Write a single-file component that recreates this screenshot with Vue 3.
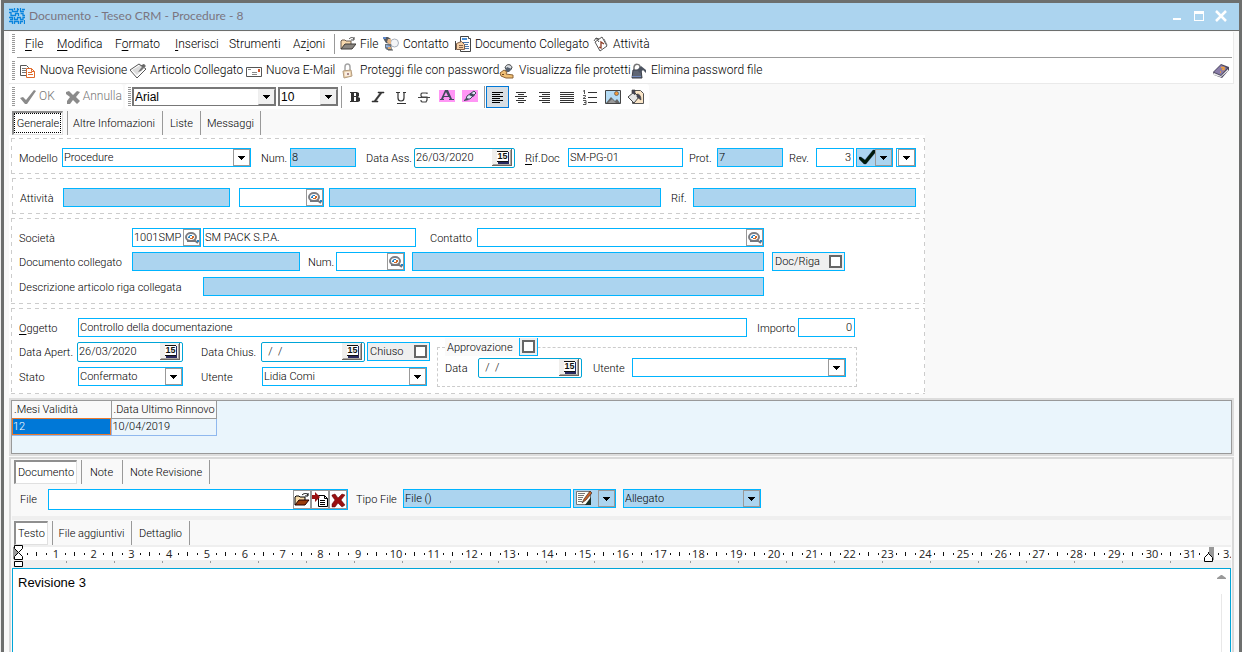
<script setup>
import { ref } from 'vue'

const menus = [
  { pre: '', key: 'F', post: 'ile' },
  { pre: '', key: 'M', post: 'odifica' },
  { pre: 'F', key: 'o', post: 'rmato' },
  { pre: '', key: 'I', post: 'nserisci' },
  { pre: 'Strumenti', key: '', post: '' },
  { pre: 'Az', key: 'i', post: 'oni' },
]
const links = [
  { icon: 'i-folder', text: 'File' },
  { icon: 'i-contact', text: 'Contatto' },
  { icon: 'i-doclink', text: 'Documento Collegato' },
  { icon: 'i-activity', text: 'Attività' },
]
const actions = [
  { icon: 'i-revision', text: 'Nuova Revisione' },
  { icon: 'i-article', text: 'Articolo Collegato' },
  { icon: 'i-mail', text: 'Nuova E-Mail' },
  { icon: 'i-lock', text: 'Proteggi file con password' },
  { icon: 'i-viewlock', text: 'Visualizza file protetti' },
  { icon: 'i-unlock', text: 'Elimina password file' },
]
const styleTools = [
  { icon: 'i-bold', text: 'Grassetto' },
  { icon: 'i-italic', text: 'Corsivo' },
  { icon: 'i-under', text: 'Sottolineato' },
  { icon: 'i-strike', text: 'Barrato' },
  { icon: 'i-color', text: 'Colore testo' },
  { icon: 'i-marker', text: 'Evidenziatore' },
]
const paraTools = [
  { icon: 'i-left', text: 'Sinistra', on: true },
  { icon: 'i-center', text: 'Centro' },
  { icon: 'i-right', text: 'Destra' },
  { icon: 'i-justify', text: 'Giustifica' },
  { icon: 'i-list', text: 'Elenco' },
  { icon: 'i-image', text: 'Immagine' },
  { icon: 'i-fill', text: 'Sfondo' },
]
const mainTabs = ['Generale', 'Altre Infomazioni', 'Liste', 'Messaggi']
const docTabs = ['Documento', 'Note', 'Note Revisione']
const textTabs = ['Testo', 'File aggiuntivi', 'Dettaglio']

const cm = 37.8
const rulerNumbers = Array.from({ length: 32 }, (_, i) => ({ n: i < 31 ? i + 1 : '3.', x: 5 + (i + 1) * cm }))
const rulerMarks = Array.from({ length: 32 }, (_, i) => Math.round(5 + i * cm))
const rulerStops = Array.from({ length: 24 }, (_, i) => 53 + i * 48)

const body = ref('Revisione 3')
</script>

<template>
  <div class="desk">
    <svg class="defs" width="0" height="0" aria-hidden="true">
      <symbol id="arrow" viewBox="0 0 7 4"><path d="M0 0h7v1h-1v1h-1v1h-1v1h-1v-1h-1v-1h-1v-1h-1z" fill="#000" /></symbol>
      <symbol id="lens" viewBox="0 0 14 12">
        <ellipse cx="6" cy="5" rx="5" ry="4" fill="#fff" stroke="#7d7d82" stroke-width="2" />
        <path d="M2 9h8M9 8l4 3" stroke="#77777c" stroke-width="2" />
        <path d="M3 5l2-2h2v1H5v2H3z" fill="#1d7fc4" /><path d="M5 6h3v1H5zM7 4h2v2H7z" fill="#d06a26" />
        <path d="M12 8h2v2h-2z" fill="#2a83c2" />
      </symbol>
      <symbol id="cal" viewBox="0 0 20 17">
        <path d="M0 0h20v17H0z" fill="#f0efed" /><path d="M0 16h19V0h1v17H0z" fill="#6b6560" /><path d="M1 15h17V1h1v15H1z" fill="#aaa5a0" />
        <path d="M15 3h2v12H6v-2h9z" fill="#28285e" /><path d="M5 2h11v11H5z" fill="#fff" /><path d="M5 2h11v1H5zM5 12h11v1H5z" fill="#111" />
      </symbol>
      <symbol id="i-folder" viewBox="0 0 16 16">
        <path d="M1 13V5l1-1h3l1 1h5v3" fill="#f7d9ae" stroke="#6b5a4c" />
        <path d="M1 13l4-5h11l-4 5z" fill="#8a8681" stroke="#3c3a38" />
        <path d="M9 3c2-2 4-2 5 0M14 1v3h-3" fill="none" stroke="#444" />
      </symbol>
      <symbol id="i-folder2" viewBox="0 0 16 16">
        <path d="M1 13V5l1-1h3l1 1h5v3" fill="#f9dca8" stroke="#000" />
        <path d="M1 13l4-5h10l-4 5z" fill="#9a3d0c" stroke="#200" />
        <path d="M8 3c2-2 5-2 6 0M14 1v3h-3" fill="none" stroke="#000" />
      </symbol>
      <symbol id="i-contact" viewBox="0 0 16 16">
        <circle cx="11.500" cy="7" r="4" fill="#f4f5f7" stroke="#a9b0bb" />
        <path d="M0 1h5l3 2-1 5-4-1-2-3z" fill="#565a60" /><path d="M5 3h3v5H6L4 6z" fill="#e6b889" />
        <path d="M0 1h3v2H0z" fill="#5e87c7" /><path d="M2 8h6l1 6H4l-2-2z" fill="#6c757f" /><path d="M3 9l4 1v2l-4-1z" fill="#8fb2e6" />
        <path d="M5 14h5" stroke="#555" /><path d="M5 11h3v2H5z" fill="#e0a86e" />
      </symbol>
      <symbol id="i-doclink" viewBox="0 0 16 16">
        <path d="M5.500 .5h8v2h2v13h-10z" fill="#fff" stroke="#444" /><path d="M7 2h5v2H7z" fill="#4a90d9" /><path d="M8 6.500h6M9 8.500h4M10 10.500h4M10 12.500h4" stroke="#4a78ad" />
        <path d="M0 5h1v9H0z" fill="#444" /><path d="M1.500 7.500l5-2 3 3v5h-8z" fill="#f5cfa4" stroke="#80604a" /><path d="M4 9.500h4M4 11.500h4" stroke="#80604a" />
      </symbol>
      <symbol id="i-activity" viewBox="0 0 16 16">
        <path d="M2 6l7-5 5 9-7 5z" fill="#fff" stroke="#555" /><path d="M1 5l2-3 3 1M3 2l3 4" fill="none" stroke="#555" />
        <path d="M6 11l2 1V6l3 2" fill="none" stroke="#8c3a22" stroke-width="1.3" /><path d="M11 3l3 6" stroke="#777" />
      </symbol>
      <symbol id="i-revision" viewBox="0 0 16 16">
        <path d="M.5 2.500h6l2 2v8h-8z" fill="#fff" stroke="#555" /><path d="M2 5.500h4M2 7.500h4M2 9.500h4" stroke="#777" />
        <path d="M6.500 5.500h5l3 3v6h-8z" fill="#fff" stroke="#e06a2b" /><path d="M11.500 5.500v3h3M8 9.500h4M8 11.500h5" fill="none" stroke="#e06a2b" />
      </symbol>
      <symbol id="i-article" viewBox="0 0 16 16">
        <path d="M0 7l9-6 7 5-9 9z" fill="#fff" stroke="#555" /><path d="M2 7l7-4 4 3-6 6z" fill="#dcdcdc" /><path d="M8 9l6-8 2 2-5 5z" fill="#777" /><path d="M9 3l5-2 1 3z" fill="#666" />
      </symbol>
      <symbol id="i-mail" viewBox="0 0 16 16">
        <path d="M.5 4.500h15v9H.5z" fill="#fff" stroke="#555" /><path d="M12 6h2v3h-2z" fill="#d4552a" /><path d="M2 6.500h3M6 9.500h5M6 11.500h5" stroke="#888" />
      </symbol>
      <symbol id="i-lock" viewBox="0 0 16 16">
        <path d="M5 8V4c0-4 5-4 5 0v4" fill="none" stroke="#a5a5a5" stroke-width="1.5" /><path d="M3 8l8-1 1 6-8 2z" fill="#efd6b4" stroke="#b39b7d" /><path d="M5 9h5v4H5z" fill="#f8ede0" /><path d="M7 10h2v2H7z" fill="#a88" />
      </symbol>
      <symbol id="i-viewlock" viewBox="0 0 16 16">
        <path d="M6 5c1-5 7-4 7 0l-3 3z" fill="#d8dde2" stroke="#444" /><path d="M8 4l5 2-3 3H5z" fill="#55606e" />
        <path d="M1 10l4-3 3 2-1 2 7 1v3H7l-5-2z" fill="#f0bf73" stroke="#8c6337" /><path d="M3 11h2v1H3z" fill="#6b4423" />
      </symbol>
      <symbol id="i-unlock" viewBox="0 0 16 16">
        <path d="M3 7V4c1-4 6-3 6 0v3" fill="none" stroke="#777" stroke-width="1.5" /><path d="M2 7h8l1 8H1z" fill="#5f6674" stroke="#3a3f4a" /><path d="M6 7l4-4 5 4v3l-3-3-3 3z" fill="#4d5461" /><path d="M1 13.500h9" stroke="#7089bd" />
      </symbol>
      <symbol id="i-book" viewBox="0 0 16 16">
        <path d="M0 9l8-8 8 3v3l-7 8-8-3z" fill="#4d4960" /><path d="M1 9l7-7 6 3-6 7z" fill="#8a7da8" /><path d="M1 10l7 3 7-7v2l-7 6-7-2z" fill="#eee" />
        <path d="M8 4.500h3v2H9M7 9h1" fill="none" stroke="#f2a13a" stroke-width="1.4" />
      </symbol>
      <symbol id="i-ok" viewBox="0 0 16 16"><path d="M0 9l3-1 3 3 8-10 2 1L7 15H5z" fill="#8b8b8b" /></symbol>
      <symbol id="i-no" viewBox="0 0 16 16"><path d="M1 3l3-1 4 4 4-4 3 1-4 5 4 4-3 3-4-4-3 4H2v-3l3-4-4-3z" fill="#8b8b8b" /></symbol>
      <symbol id="i-red" viewBox="0 0 16 16"><path d="M2 3l3-1 3 4 4-4 3 1-4 5 4 5-3 2-4-4-3 4H2v-3l3-4-3-4z" fill="#9a0f10" stroke="#500" stroke-width=".5" /></symbol>
      <symbol id="i-bold" viewBox="0 0 16 16"><path fill-rule="evenodd" d="M3 3h7l2 1v3l-1 1 2 1v3l-2 1H3v-1h1V4H3zM7 4v3h2V4zM7 8v4h2V8z" fill="#333" /></symbol>
      <symbol id="i-italic" viewBox="0 0 16 16"><path d="M8 3h6v1h-2L6 12h2v1H2v-1h2l6-8H8z" fill="#333" stroke="#333" stroke-width=".5" /></symbol>
      <symbol id="i-under" viewBox="0 0 16 16"><path d="M5 3v6q0 3 3 3t3-3V3M3 3.500h4M10 3.500h3M4 14.500h9" fill="none" stroke="#333" stroke-width="1.2" /></symbol>
      <symbol id="i-strike" viewBox="0 0 16 16"><path d="M11 5V4H6L5 5v2l1 1h5v3l-1 2H6l-1-1v-1M2 8.500h12" fill="none" stroke="#444" stroke-width="1.2" /></symbol>
      <symbol id="i-color" viewBox="0 0 16 16"><path d="M0 1h16v12H0z" fill="#ff96f5" /><path fill-rule="evenodd" d="M6 1h3l4 9h2v1h-5v-1h1L10 8H5l-1 2h1v1H1v-1h1zM7 3L5 7h4z" fill="#414a5c" /></symbol>
      <symbol id="i-marker" viewBox="0 0 16 16"><path d="M0 1h16v12H0z" fill="#ff96f5" /><path d="M4 10l1-3 7-5 2 2-6 6z" fill="#dce4f4" stroke="#414a5c" /><path d="M2 11l3-2 2 2-5 1zM9 4l4 2-2 2-4-2z" fill="#414a5c" /></symbol>
      <symbol id="i-left" viewBox="0 0 16 16"><path d="M2 3.500h11M2 5.500h8M2 7.500h11M2 9.500h8M2 11.500h11M2 13.500h8" stroke="#000" /></symbol>
      <symbol id="i-center" viewBox="0 0 16 16"><path d="M3 3.500h10M5 5.500h6M2 7.500h12M5 9.500h6M3 11.500h10M5 13.500h6" stroke="#333" /></symbol>
      <symbol id="i-right" viewBox="0 0 16 16"><path d="M3 3.500h11M6 5.500h8M3 7.500h11M6 9.500h8M3 11.500h11M6 13.500h8" stroke="#333" /></symbol>
      <symbol id="i-justify" viewBox="0 0 16 16"><path d="M1 3.500h14M1 5.500h14M1 7.500h14M1 9.500h14M1 11.500h14M1 13.500h14" stroke="#333" /></symbol>
      <symbol id="i-list" viewBox="0 0 16 16"><path d="M6 3.500h9M6 8.500h9M6 13.500h9" stroke="#333" /><path d="M2.500 1v4M1 2h1M1 6.500h2.500v1L1 9.500h3M1 11.500h3v4H1M2 13.500h2" fill="none" stroke="#444" stroke-width=".9" /></symbol>
      <symbol id="i-image" viewBox="0 0 16 16"><path d="M.5 1.500h15v13H.5z" fill="#b5dcf5" stroke="#444" /><path d="M1 14l5-6 4 4 2-2 3 4z" fill="#666" /><path d="M3 14l4-4 4 4z" fill="#999" /><circle cx="11.500" cy="4.500" r="2" fill="#f29a3a" stroke="#555" stroke-width=".7" /></symbol>
      <symbol id="i-fill" viewBox="0 0 16 16"><path d="M4.500 1.500h8l3 3v10h-11z" fill="#fbe6c8" stroke="#555" /><path d="M0 8l6-5 5 5-5 6z" fill="#e6e6e6" stroke="#444" /><path d="M4 4V1h3v5M9 5q4 0 4 6l-4-3z" fill="#445" stroke="#444" stroke-width=".7" /></symbol>
      <symbol id="i-insert" viewBox="0 0 16 16"><path d="M6.500 3.500h6l3 3v8h-9z" fill="#fff" stroke="#000" /><path d="M12.500 3.500v3h3M8 8.500h5M8 10.500h5M8 12.500h5" fill="none" stroke="#000" /><path d="M0 3h3V0l5 5-5 5V7H0z" fill="#9a0f10" /></symbol>
      <symbol id="i-write" viewBox="0 0 16 16"><path d="M.5 1.500h14v13H.5z" fill="#fffef6" stroke="#777" /><path d="M2 3.500h7M2 5.500h6M2 7.500h5M2 9.500h4M2 11.500h4" stroke="#777" /><path d="M15 7v8H9z" fill="#1c2e25" /><path d="M6 13l2-4 6-8 2 2-6 7z" fill="#c96228" stroke="#222" stroke-width=".6" /></symbol>
      <symbol id="i-check" viewBox="0 0 16 16"><path d="M0 8h2l4 3 8-10h2v3L7 15H5L0 10z" fill="#001a08" stroke="#0a1b55" stroke-width=".3" /></symbol>
      <symbol id="i-logo" viewBox="0 0 16 16">
        <path d="M0 1.500h3.500v2H6M5.500 0v2M8.500 0v3.500H6M8 1.500h2M11.500 0v3.500H15M13 1.500h3M0 4.500h2v3h4.500v-2H9M0 9.500h3.500v2H1M9.500 5v3M11.500 5.500H14v2h2M5.500 9v2.500h3v-2h3v2H14v-2h2M0 13.500h3.500V16M5.500 16v-2.500h4V16M11.500 16v-2.500H14M15.500 12v4" fill="none" stroke="#0a84dd" stroke-width="1.300" />
      </symbol>
    </svg>

    <header class="title">
      <svg class="logo"><use href="#i-logo" /></svg>
      <h1>Documento - Teseo CRM - Procedure - 8</h1>
      <button class="win" aria-label="Riduci"><svg viewBox="0 0 12 12"><path d="M2 8h8v2H2z" fill="#fff" /></svg></button>
      <button class="win" aria-label="Ingrandisci"><svg viewBox="0 0 12 12"><path fill-rule="evenodd" d="M1 1h10v10H1zM2 4v6h8V4z" fill="#fff" /></svg></button>
      <button class="win" aria-label="Chiudi"><svg viewBox="0 0 12 12"><path d="M1 1l10 10M11 1L1 11" stroke="#fff" stroke-width="2.500" /></svg></button>
    </header>

    <main class="client">
      <div class="bars">
        <div class="bar bar-menu">
          <i class="grip"></i>
          <nav class="menus">
            <button v-for="m in menus" :key="m.pre + m.key + m.post">{{ m.pre }}<u>{{ m.key }}</u>{{ m.post }}</button>
          </nav>
          <nav class="links">
            <button v-for="l in links" :key="l.text"><svg class="ic"><use :href="'#' + l.icon" /></svg>{{ l.text }}</button>
          </nav>
        </div>
        <div class="bar bar-actions">
          <i class="grip"></i>
          <nav class="actions">
            <button v-for="a in actions" :key="a.text"><svg class="ic"><use :href="'#' + a.icon" /></svg>{{ a.text }}</button>
          </nav>
          <button class="help" aria-label="Guida"><svg class="ic"><use href="#i-book" /></svg></button>
        </div>
      </div>

      <div class="formatbar">
        <div class="chunk confirm">
          <i class="grip"></i>
          <button disabled><svg class="ic"><use href="#i-ok" /></svg>OK</button>
          <button disabled><svg class="ic"><use href="#i-no" /></svg>Annulla</button>
        </div>
        <div class="chunk tools">
          <i class="grip"></i>
          <span class="sunk sunk-font"><select aria-label="Carattere"><option>Arial</option></select><span class="drop"><svg><use href="#arrow" /></svg></span></span>
          <span class="sunk sunk-size"><select aria-label="Dimensione"><option>10</option></select><span class="drop"><svg><use href="#arrow" /></svg></span></span>
          <div class="group">
            <button v-for="t in styleTools" :key="t.icon" :aria-label="t.text"><svg class="ic"><use :href="'#' + t.icon" /></svg></button>
          </div>
          <div class="group">
            <button v-for="t in paraTools" :key="t.icon" :aria-label="t.text" :class="{ on: t.on }"><svg class="ic"><use :href="'#' + t.icon" /></svg></button>
          </div>
        </div>
      </div>

      <nav class="tabs tabs-main">
        <button v-for="(t, i) in mainTabs" :key="t" :class="{ active: i === 0, focus: i === 0 }">{{ t }}</button>
      </nav>

      <form class="form" @submit.prevent>
        <section class="box row row-model">
          <label for="modello">Modello</label>
          <span class="field combo"><select id="modello"><option>Procedure</option></select><span class="drop"><svg><use href="#arrow" /></svg></span></span>
          <label class="in" for="num">Num.</label><input id="num" class="field ro" value="8" readonly>
          <label class="in" for="dass">Data Ass.</label>
          <span class="date"><input id="dass" value="26/03/2020"><button aria-label="Calendario"><svg><use href="#cal" /></svg><b>15</b></button></span>
          <label class="in" for="rifdoc"><u>R</u>if.Doc</label><input id="rifdoc" class="field" value="SM-PG-01">
          <label class="near" for="prot">Prot.</label><input id="prot" class="field ro" value="7" readonly>
          <label class="near" for="rev">Rev.</label><input id="rev" class="field num" value="3">
          <span class="field ro combo statepick"><svg class="ic"><use href="#i-check" /></svg><button class="drop" aria-label="Scegli stato"><svg><use href="#arrow" /></svg></button></span>
          <span class="field combo mini"><button class="drop" aria-label="Altre revisioni"><svg><use href="#arrow" /></svg></button></span>
        </section>

        <section class="box row row-activity">
          <label for="att">Attività</label><input id="att" class="field ro" readonly>
          <span class="field combo"><input aria-label="Codice attività"><button class="drop" aria-label="Cerca attività"><svg class="lens"><use href="#lens" /></svg></button></span>
          <input class="field ro" aria-label="Descrizione attività" readonly>
          <label class="in" for="rif">Rif.</label><input id="rif" class="field ro" readonly>
        </section>

        <section class="box company">
          <div class="row row-company">
            <label for="soc">Società</label>
            <span class="field combo"><input id="soc" value="1001SMP"><button class="drop" aria-label="Cerca società"><svg class="lens"><use href="#lens" /></svg></button></span>
            <input class="field" aria-label="Ragione sociale" value="SM PACK S.P.A.">
            <label for="cont">Contatto</label>
            <span class="field combo"><input id="cont"><button class="drop" aria-label="Cerca contatto"><svg class="lens"><use href="#lens" /></svg></button></span>
          </div>
          <div class="row row-linked">
            <label for="doc">Documento collegato</label><input id="doc" class="field ro" readonly>
            <label for="dnum">Num.</label>
            <span class="field combo"><input id="dnum"><button class="drop" aria-label="Cerca documento"><svg class="lens"><use href="#lens" /></svg></button></span>
            <input class="field ro" aria-label="Descrizione documento" readonly>
            <label class="field tick">Doc/Riga<input type="checkbox"></label>
          </div>
          <div class="row row-article">
            <label for="desc">Descrizione articolo riga collegata</label><input id="desc" class="field ro" readonly>
          </div>
        </section>

        <section class="box subject">
          <div class="row row-subject">
            <label for="ogg"><u>O</u>ggetto</label><input id="ogg" class="field" value="Controllo della documentazione">
            <label class="in" for="imp">Importo</label><input id="imp" class="field num" value="0">
          </div>
          <div class="details">
            <div class="left">
              <div class="row row-dates">
                <label for="dap">Data Apert.</label>
                <span class="date"><input id="dap" value="26/03/2020"><button aria-label="Calendario"><svg><use href="#cal" /></svg><b>15</b></button></span>
                <label for="dch">Data Chius.</label>
                <span class="date"><input id="dch" value="  /  /"><button aria-label="Calendario"><svg><use href="#cal" /></svg><b>15</b></button></span>
                <label class="field tick">Chiuso<input type="checkbox"></label>
              </div>
              <div class="row row-state">
                <label for="stato">Stato</label>
                <span class="field combo"><select id="stato"><option>Confermato</option></select><span class="drop"><svg><use href="#arrow" /></svg></span></span>
                <label for="ut">Utente</label>
                <span class="field combo"><select id="ut"><option>Lidia Comi</option></select><span class="drop"><svg><use href="#arrow" /></svg></span></span>
              </div>
            </div>
            <fieldset class="approval">
              <legend><label for="appr">Approvazione</label><span><input id="appr" type="checkbox"></span></legend>
              <div class="row row-approval">
                <label for="apd">Data</label>
                <span class="date"><input id="apd" value="  /  /"><button aria-label="Calendario"><svg><use href="#cal" /></svg><b>15</b></button></span>
                <label for="aut">Utente</label>
                <span class="field combo"><select id="aut"><option></option></select><span class="drop"><svg><use href="#arrow" /></svg></span></span>
              </div>
            </fieldset>
          </div>
        </section>
      </form>

      <div class="gridpane">
        <table>
          <colgroup><col class="col-months"><col class="col-renewal"></colgroup>
          <thead><tr><th>.Mesi Validità</th><th>.Data Ultimo Rinnovo</th></tr></thead>
          <tbody><tr><td class="sel">12</td><td>10/04/2019</td></tr></tbody>
        </table>
      </div>

      <section class="lower">
        <nav class="tabs tabs-doc">
          <button v-for="(t, i) in docTabs" :key="t" :class="{ active: i === 0 }">{{ t }}</button>
        </nav>
        <div class="row row-file">
          <label for="file">File</label>
          <span class="field combo tall"><input id="file">
            <button class="drop" aria-label="Apri"><svg class="ic"><use href="#i-folder2" /></svg></button>
            <button class="drop" aria-label="Inserisci"><svg class="ic"><use href="#i-insert" /></svg></button>
            <button class="drop" aria-label="Elimina"><svg class="ic"><use href="#i-red" /></svg></button>
          </span>
          <label for="tipo">Tipo File</label><input id="tipo" class="field ro" value="File ()" readonly>
          <span class="field ro combo statepick"><svg class="ic"><use href="#i-write" /></svg><button class="drop" aria-label="Scegli tipo"><svg><use href="#arrow" /></svg></button></span>
          <span class="field ro combo"><select aria-label="Modalità"><option>Allegato</option></select><span class="drop"><svg><use href="#arrow" /></svg></span></span>
        </div>
        <nav class="tabs tabs-text">
          <button v-for="(t, i) in textTabs" :key="t" :class="{ active: i === 0 }">{{ t }}</button>
        </nav>
        <svg class="ruler" width="100%" height="23">
          <rect x="1" y="2" width="100%" height="13" fill="#fff" />
          <g fill="#111">
            <template v-for="x in rulerMarks" :key="x">
              <rect :x="x + 9" y="8" width="1" height="2" /><rect :x="x + 18" y="7" width="1" height="4" /><rect :x="x + 28" y="8" width="1" height="2" />
            </template>
          </g>
          <g fill="#999"><rect v-for="x in rulerStops" :key="x" :x="x" y="16" width="1" height="2" /></g>
          <g class="nums"><text v-for="r in rulerNumbers" :key="r.n" :x="r.x" y="13" text-anchor="middle">{{ r.n }}</text></g>
          <path d="M0 2h5v12H0z" fill="#999" />
          <path d="M1.500 .5h8v3l-4 4 4 4v3h-8v-3l4-4-4-4z" fill="#fff" stroke="#000" /><path d="M1.500 16.500h8v5h-8z" fill="#fff" stroke="#000" />
          <path d="M1196 2h5v13h-5z" fill="#999" /><path d="M1191.500 16.500v-4l4-4 4 4v4z" fill="#fff" stroke="#000" />
        </svg>
        <div class="editor">
          <textarea v-model="body" aria-label="Testo"></textarea>
          <div class="scroll"><svg width="9" height="5" viewBox="0 0 9 5"><path d="M0 4h9v-1L5 0H4L0 3z" fill="#999" /></svg><i></i></div>
        </div>
      </section>
    </main>
  </div>
</template>

<style>
body { margin: 0; background: #6d6f6e; }
</style>

<style scoped>
* { box-sizing: border-box; }
.desk {
  display: flex; flex-direction: column; min-height: 100vh; padding: 3px 3px 0 3px; border-left: 1px solid #eee;
  background: #6d6f6e; color: #000; font: 11px/15px Roboto, "Open Sans", sans-serif; font-weight: 300;
}
.defs { position: absolute; }
button, input, select, textarea { font: inherit; color: inherit; border: 0; margin: 0; padding: 0; background: none; border-radius: 0; outline: 0; min-width: 0; }
button { white-space: nowrap; }
svg { display: block; flex: none; }
u { text-underline-offset: 2px; }
.ic { width: 16px; height: 16px; }

.title { display: flex; align-items: center; height: 27px; padding: 0 7px 2px 5px; background: #acd4ef; }
.logo { width: 16px; height: 16px; }
.title h1 { flex: 1; margin: 0 0 0 4px; font: 12px/16px Lato, "Open Sans", sans-serif; color: #7b7480; }
.win { width: 22px; height: 22px; display: grid; place-items: center; }
.win svg { width: 12px; height: 12px; }

.client { flex: 1; display: flex; flex-direction: column; margin-top: 1px; padding: 1px 5px 0 5px; background: #f9f9f9; }
.bars { padding: 0 1px 0 3px; background: #fff; border-right: 1px solid #eaeaea; border-bottom: 1px solid #eaeaea; font-size: 12px; }
.bar { display: flex; align-items: center; height: 25px; }
.bar-menu { position: relative; height: 26px; padding-bottom: 2px; background: linear-gradient(#999, #999) 5px 25px / 100% 1px no-repeat; }
.grip { flex: none; width: 3px; height: 20px; background: repeating-linear-gradient(#999 0 1px, #fff 1px 2px); }
.menus { display: grid; grid-template-columns: 32px 58px 60px 54px 64px 41px; padding-left: 10px; border-right: 1px solid #999; margin-right: 5px; height: 20px; }
.menus button, .links button, .actions button { text-align: left; }
.links, .actions { display: grid; height: 20px; }
.links { grid-template-columns: 43px 72px 138px 60px; }
.actions { grid-template-columns: 110px 116px 94px 159px 132px 126px; margin-left: 5px; }
.links button, .actions button, .confirm button { display: flex; align-items: center; gap: 4px; }
.help { margin-left: auto; margin-right: 3px; }

.formatbar { display: flex; gap: 2px; font-size: 12px; }
.chunk { display: flex; align-items: center; height: 25px; padding-left: 3px; background: #fff; border-radius: 3px; }
.confirm { width: 114px; color: #777; gap: 5px; }
.confirm button { gap: 3px; }
.confirm button:last-child { margin-left: 5px; gap: 2px; }
.tools { width: 524px; }
.sunk { display: flex; height: 19px; margin-left: 1px; border: 1px solid #777; border-width: 2px 1px 1px 2px; font: 12px "Liberation Sans", Arial, sans-serif; color: #000; background: #fff; }
.sunk-font { width: 144px; }
.sunk-size { width: 60px; margin-left: 2px; }
.sunk .drop { border: 1px solid #777; border-top-color: #eee; border-left-color: #eee; background: #f0f0f0; }
.group { display: flex; margin-left: 3px; border-left: 1px solid #999; padding-left: 1px; }
.group button { width: 23px; height: 22px; display: grid; place-items: center; border: 1px solid transparent; }
.group button.on { border-color: #0078d7; background: #d8dee3; }

.tabs { display: grid; height: 25px; padding-top: 1px; }
.tabs button { border-right: 1px solid #999; height: 24px; padding-top: 1px; text-align: center; }
.tabs button.active { margin-right: 4px; padding-top: 0; background: #fff; border: 1px solid #e0e0e0; border-top: 2px solid #8f8f8f; border-left: 2px solid #8f8f8f; box-shadow: 4px 0 0 #f9f9f9, 5px 0 0 #999; }
.tabs button.focus { outline: 1px dotted #000; outline-offset: -3px; }
.tabs-main { grid-template-columns: 54px 97px 38px 60px; padding-left: 3px; margin-top: 1px; }
.tabs-main button.active { margin-right: 3px; }
.tabs-doc { grid-template-columns: 67px 42px 87px; padding-left: 2px; }
.tabs-text { grid-template-columns: 38px 80px 58px; padding-left: 2px; border-top: 4px solid #efefef; height: 29px; }

.form { display: flex; flex-direction: column; gap: 4px; max-width: 916px; padding: 3px 0 0 2px; background: #fff; }
.box {
  --d: #ccc;
  padding: 10px 9px 6px 8px; min-height: 36px;
  background:
    repeating-linear-gradient(90deg, var(--d) 0 4px, transparent 4px 8px) top / 100% 1px no-repeat,
    repeating-linear-gradient(90deg, var(--d) 0 4px, transparent 4px 8px) bottom / 100% 1px no-repeat,
    repeating-linear-gradient(var(--d) 0 4px, transparent 4px 8px) left / 1px 100% no-repeat,
    repeating-linear-gradient(var(--d) 0 4px, transparent 4px 8px) right / 1px 100% no-repeat;
}
.row { display: grid; align-items: start; }
label { padding-top: 3px; white-space: nowrap; }
label.in { padding-left: 10px; }
label.near { padding-left: 6px; }
.field { height: 19px; width: 100%; border: 1px solid #00b4ff; background: #fff; }
input.field { padding: 0 1px; }
.ro { background: #acd4ef; }
input.num { text-align: right; padding-right: 2px; }
.combo { display: flex; }
.combo > input, .combo > select, .sunk > select { flex: 1; width: 0; padding: 0 1px; appearance: none; }
.drop { flex: none; width: 17px; display: grid; place-items: center; border: 1px solid #999; }
.drop svg { width: 7px; height: 4px; }
.drop svg.lens { width: 14px; height: 12px; }
.drop svg.ic { width: 16px; height: 16px; }
.statepick { padding-left: 2px; justify-content: space-between; }
.date { display: flex; height: 20px; padding: 0 2px 0 1px; border: 1px solid #00a5d8; border-radius: 2px; background: #fff; }
.date input { flex: 1; width: 0; padding: 0 0 2px; white-space: pre; }
.date button { position: relative; width: 20px; height: 17px; }
.date svg { width: 20px; height: 17px; }
.date b { position: absolute; left: 5px; top: 2px; width: 11px; text-align: center; font: bold 9px/11px "Liberation Sans", Arial, sans-serif; color: #111; }
.tick { display: flex; align-items: center; justify-content: space-between; padding: 0 2px; background: #efefef; }
input[type="checkbox"] { appearance: none; width: 13px; height: 13px; border: 2px solid #666; background: #fff; }

.row-model { grid-template-columns: 43px 1fr 39px 66px 58px 101px 53px 115px 34px 66px 33px 38px 39px 23px; }
.row-model .statepick { margin-left: 2px; width: 37px; }
.row-model .mini { margin-left: 3px; width: 20px; justify-content: end; }
.row-activity { grid-template-columns: 43px 167px 9px 85px 5px 1fr 32px 223px; margin-left: 1px; }
.row-activity > :nth-child(3) { grid-column: 4; }
.row-activity > :nth-child(4) { grid-column: 6; }
.company, .subject { display: flex; flex-direction: column; gap: 5px; min-height: 86px; }
.row-company { grid-template-columns: 113px 69px 215px 61px 1fr 152px; }
.row-company > :nth-child(3) { margin-left: 2px; width: auto; }
.row-company > :nth-child(4) { padding-left: 14px; }
.row-linked { grid-template-columns: 113px 168px 36px 69px 7px 1fr 8px 73px 71px; }
.row-linked > :nth-child(3) { padding-left: 8px; }
.row-linked > :nth-child(5) { grid-column: 6; }
.row-linked > :nth-child(6) { grid-column: 8; }
.row-article { grid-template-columns: 184px 1fr 152px; padding-top: 1px; }
.subject { gap: 0; }
.row-subject { grid-template-columns: 59px 1fr 51px 57px 61px; }
.details { display: grid; grid-template-columns: 411px 1fr; column-gap: 7px; margin-right: 59px; padding-top: 1px; }
.left { display: grid; gap: 5px; align-content: start; padding-top: 4px; }
.row-dates { grid-template-columns: 58px 106px 78px 104px 2px 63px; }
.row-dates > :nth-child(3), .row-state > :nth-child(3) { padding-left: 18px; }
.row-dates > .tick { grid-column: 6; }
.row-state { grid-template-columns: 59px 105px 79px 165px; }
.approval { position: relative; margin: 0; padding: 2px 10px 10px 7px; border: 1px dashed #ccc; min-width: 0; height: 49px; }
.approval legend { display: grid; grid-template-columns: 72px 19px; height: 18px; padding: 0 0 0 2px; background: #fafafa; }
.approval legend label { padding: 2px 0 0; }
.approval legend span { display: grid; place-items: center; height: 18px; border: 1px solid #00b4ff; border-top: 0; background: #efefef; }
.row-approval { grid-template-columns: 33px 104px 50px 1fr; }
.row-approval > :nth-child(3) { padding-left: 11px; }

.gridpane { margin: 6px 2px 0 2px; min-height: 54px; background: #eaf5fc; border: 1px solid #999; box-shadow: 0 0 0 2px #ddd; }
table { border-collapse: collapse; table-layout: fixed; width: 204px; }
.col-months { width: 99px; }
.col-renewal { width: 105px; }
th, td { height: 17px; padding: 0 0 0 1px; text-align: left; font-weight: 300; white-space: nowrap; border: 1px solid #8fb8ee; border-top: 0; }
th { padding: 1px 0 0 2px; background: #f9f9f9; border-color: #999; }
tr > :first-child { border-left: 0; }
td.sel { background: #0078d7; color: #fff; outline: 1px solid #e8792f; outline-offset: -1px; }

.lower { flex: 1; display: flex; flex-direction: column; margin-top: 3px; padding: 0 1px; border: 2px solid #d9d9d9; border-bottom: 0; }
.row-file { grid-template-columns: 28px 300px 55px 168px 2px 43px 7px 138px; padding: 5px 0 6px 8px; }
.row-file > :nth-child(3) { padding-left: 8px; }
.row-file > :nth-child(5) { grid-column: 6; }
.row-file > :nth-child(6) { grid-column: 8; }
.row-file .tall { height: 21px; }
.row-file .tall .drop { width: 18px; }
.ruler { background: #efefef; margin-left: 1px; width: auto; }
.nums { font: 11px "Open Sans", "Noto Sans", sans-serif; fill: #222; }
.editor { flex: 1; display: flex; min-height: 84px; background: #fff; border: 1px solid #00a5d8; border-width: 1px 1px 0; }
.editor textarea { flex: 1; resize: none; padding: 5px; font: 13px/17px "Liberation Sans", Arial, sans-serif; color: #000; }
.scroll { display: flex; flex-direction: column; align-items: center; width: 18px; padding-top: 6px; }
.scroll i { flex: 1; width: 1px; margin-top: 14px; background: #e8e8e8; }
</style>
